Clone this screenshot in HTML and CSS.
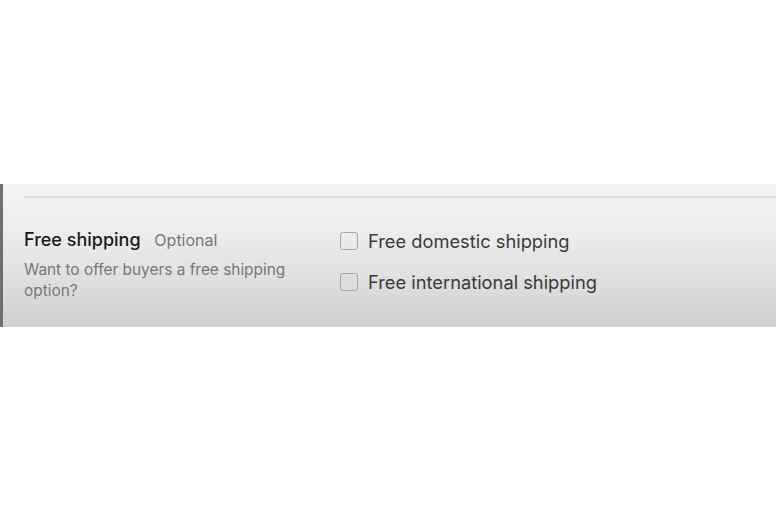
FILE: index.html
```html
<!DOCTYPE html>
<html>
<head>
<meta charset="utf-8">
<link rel="stylesheet" href="styles.css">
</head>
<body>
<section class="panel">
  <div class="divider"></div>
  <div class="row">
    <div class="info">
      <div class="title">Free shipping <span class="opt">Optional</span></div>
      <p class="desc">Want to offer buyers a free shipping option?</p>
    </div>
    <div class="choices">
      <label class="choice"><span class="box"></span>Free domestic shipping</label>
      <label class="choice"><span class="box"></span>Free international shipping</label>
    </div>
  </div>
</section>
</body>
</html>
```
FILE: styles.css
```css
html, body { margin: 0; padding: 0; background: #fff; }
body { font-family: Inter, "Noto Sans", sans-serif; }
.panel {
  margin-top: 184px;
  height: 143px;
  box-sizing: border-box;
  border-left: 3px solid #6f6f6f;
  background: linear-gradient(#f4f4f4, #ebebeb 40%, #d0d0d0);
  padding: 12px 0 0 21px;
}
.divider { border-top: 2px solid #dcdcdc; }
.row { display: flex; padding-top: 31px; }
.info { width: 316px; }
.title { font-size: 18px; font-weight: 500; color: #1a1a1a; line-height: 22px; }
.opt { font-size: 16px; font-weight: 400; color: #777; margin-left: 9px; }
.desc { margin: 8px 0 0; font-size: 15.4px; line-height: 21px; color: #777; width: 280px; }
.choices { display: flex; flex-direction: column; gap: 21px; padding-top: 2px; }
.choice { display: flex; align-items: center; gap: 10px; font-size: 18.3px; color: #3a3a3a; line-height: 20px; }
.box { width: 18px; height: 18px; border: 1.5px solid #a5a5a5; border-radius: 3px; box-sizing: border-box; }
```
